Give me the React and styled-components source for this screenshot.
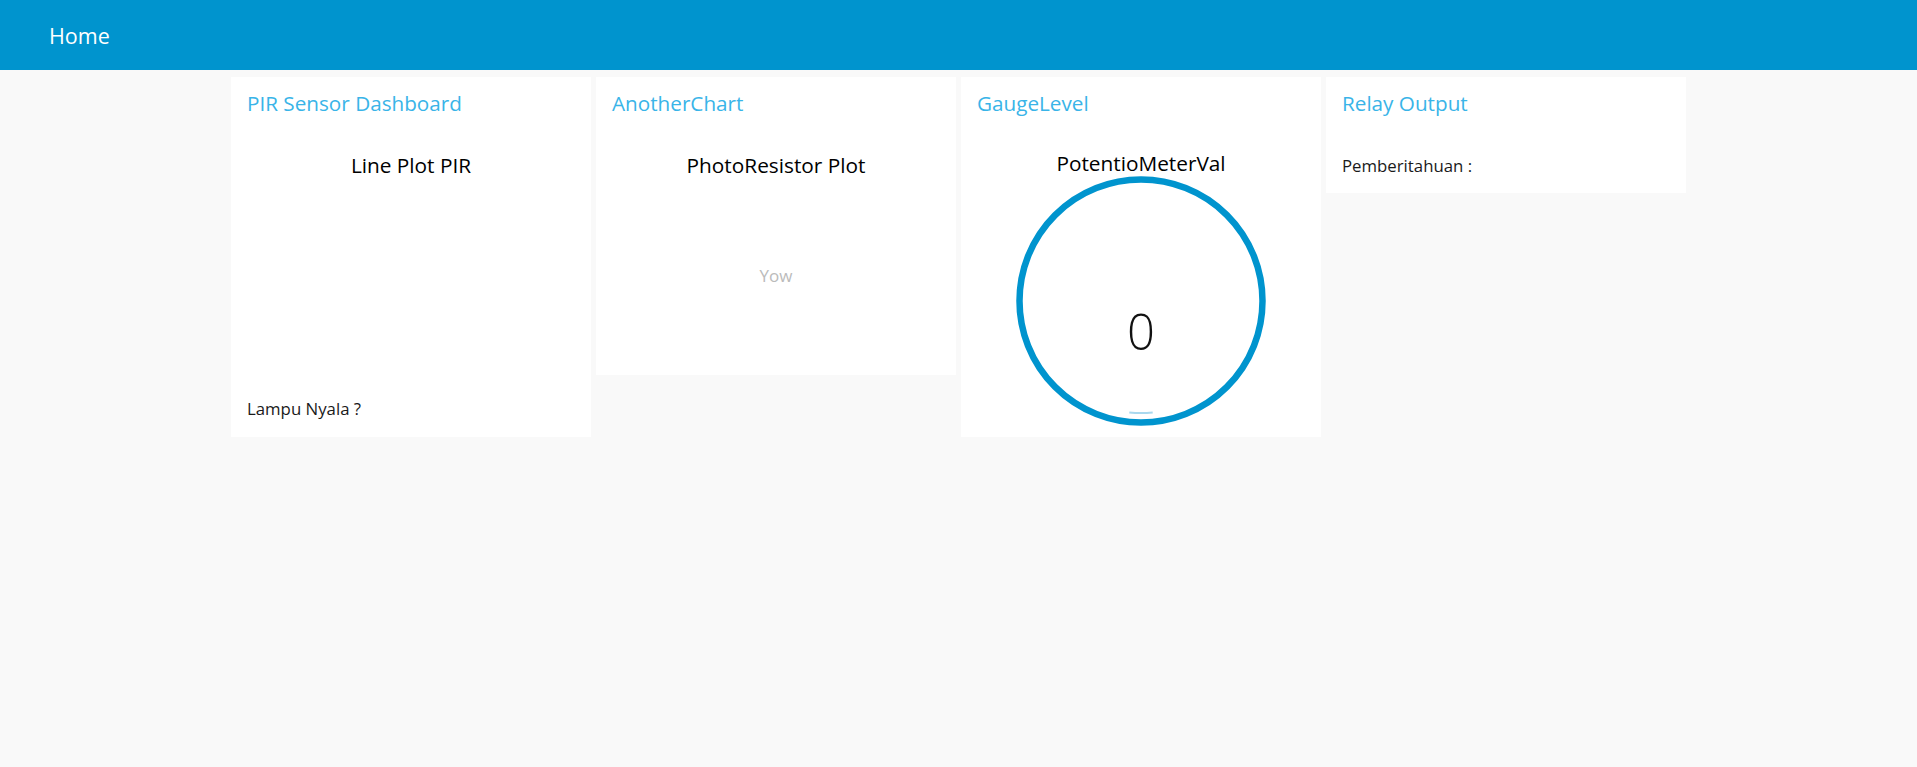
import React from "react";
import styled, { createGlobalStyle } from "styled-components";

const GlobalStyle = createGlobalStyle`
  html, body {
    margin: 0;
    padding: 0;
    background: #f9f9f9;
    font-family: "Open Sans", "Noto Sans", sans-serif;
    color: #111;
  }
`;

const Toolbar = styled.header`
  height: 70px;
  background-color: #0094ce;
  display: flex;
  align-items: center;
  padding-left: 49px;
  color: white;
  font-size: 21.5px;
`;

const Main = styled.main`
  display: flex;
  justify-content: center;
  align-items: flex-start;
  gap: 5px;
  padding-top: 7px;
`;

const Card = styled.section`
  width: 360px;
  height: ${(p) => p.h}px;
  box-sizing: border-box;
  background: white;
  padding: 14px 16px 0;
  display: flex;
  flex-direction: column;
`;

const CardTitle = styled.div`
  font-size: 20.7px;
  line-height: 25px;
  color: #39b4e8;
  white-space: nowrap;
`;

const ChartTitle = styled.div`
  margin-top: ${(p) => p.top || 37}px;
  font-size: 20.8px;
  line-height: 25px;
  text-align: center;
  color: #000;
`;

const ChartArea = styled.div`
  flex: 1;
  display: flex;
  align-items: center;
  justify-content: center;
  padding-bottom: 2px;
`;

const Placeholder = styled.span`
  font-size: 17px;
  line-height: 20px;
  color: #bbb;
`;

const TextRow = styled.div`
  margin-top: ${(p) => p.top || 0}px;
  margin-bottom: ${(p) => p.bottom || 0}px;
  font-size: 16.8px;
  line-height: 20px;
  color: #1a1a1a;
`;

const Gauge = styled.svg`
  display: block;
  margin: 0 auto;
`;

function DonutGauge({ value }) {
  return (
    <Gauge width="250" height="250" viewBox="0 0 250 250">
      <circle cx="125" cy="125" r="121.5" fill="none" stroke="#0094ce" strokeWidth="6.5" />
      <path d="M 113.3 236.4 A 112 112 0 0 0 136.7 236.4" fill="none" stroke="#a9d8ee" strokeWidth="2" />
      <text
        x="125"
        y="174"
        textAnchor="middle"
        fontFamily="Open Sans, sans-serif"
        fontWeight="300"
        fontSize="49"
        fill="#111"
      >
        {value}
      </text>
    </Gauge>
  );
}

export default function App() {
  return (
    <>
      <GlobalStyle />
      <Toolbar>Home</Toolbar>
      <Main>
        <Card h={360}>
          <CardTitle>PIR Sensor Dashboard</CardTitle>
          <ChartTitle>Line Plot PIR</ChartTitle>
          <ChartArea />
          <TextRow bottom={18.5}>Lampu Nyala ?</TextRow>
        </Card>
        <Card h={298}>
          <CardTitle>AnotherChart</CardTitle>
          <ChartTitle>PhotoResistor Plot</ChartTitle>
          <ChartArea>
            <Placeholder>Yow</Placeholder>
          </ChartArea>
        </Card>
        <Card h={360}>
          <CardTitle>GaugeLevel</CardTitle>
          <ChartTitle top={34.5}>PotentioMeterVal</ChartTitle>
          <DonutGauge value={0} />
        </Card>
        <Card h={116}>
          <CardTitle>Relay Output</CardTitle>
          <TextRow top={39.5}>Pemberitahuan :</TextRow>
        </Card>
      </Main>
    </>
  );
}
